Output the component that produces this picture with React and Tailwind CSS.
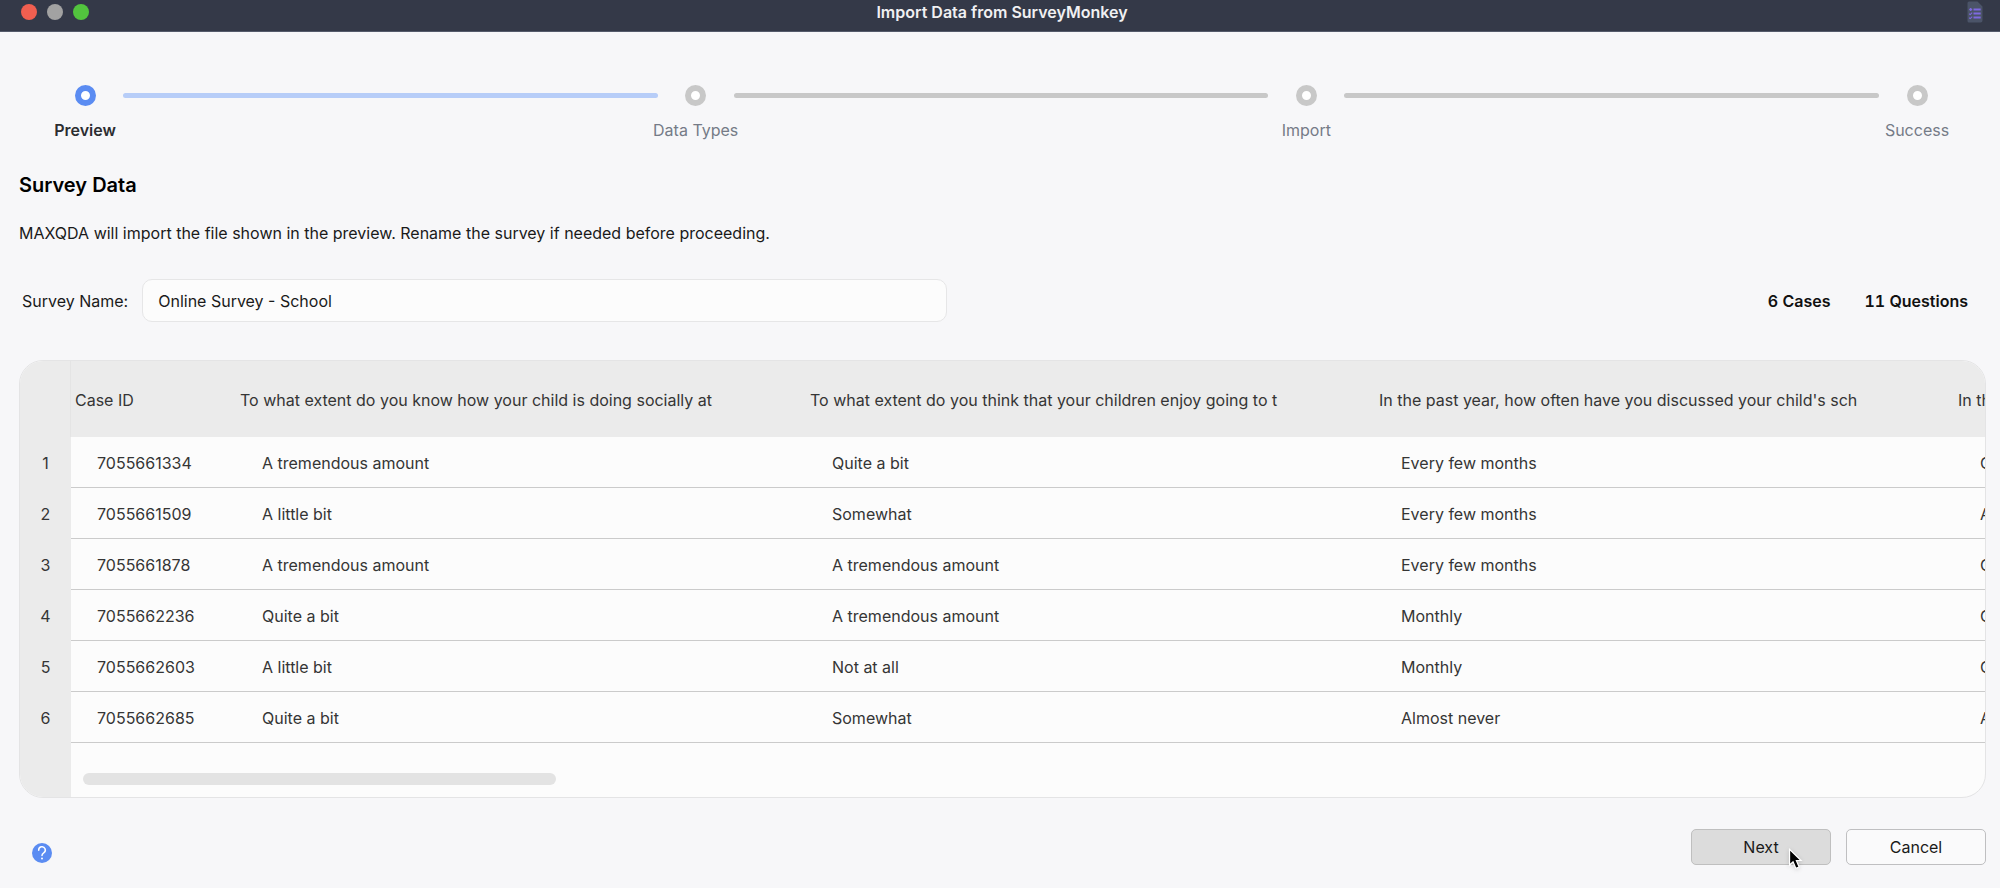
import React, { useState } from "react";

const steps = ["Preview", "Data Types", "Import", "Success"];

const columns = [
  "Case ID",
  "To what extent do you know how your child is doing socially at",
  "To what extent do you think that your children enjoy going to t",
  "In the past year, how often have you discussed your child's sch",
  "In the past year, how often have you visited your child's school",
];

const rows = [
  ["7055661334", "A tremendous amount", "Quite a bit", "Every few months", "Once or twice"],
  ["7055661509", "A little bit", "Somewhat", "Every few months", "Almost never"],
  ["7055661878", "A tremendous amount", "A tremendous amount", "Every few months", "Once or twice"],
  ["7055662236", "Quite a bit", "A tremendous amount", "Monthly", "Once or twice"],
  ["7055662603", "A little bit", "Not at all", "Monthly", "Once or twice"],
  ["7055662685", "Quite a bit", "Somewhat", "Almost never", "Almost never"],
];

function SurveyIcon() {
  return (
    <svg width="16" height="22" viewBox="0 0 16 22" aria-hidden="true">
      <path d="M2 0.500H10.500L15.500 5.500V19.500a2 2 0 0 1-2 2H2a1.500 1.500 0 0 1-1.500-1.500V2A1.500 1.500 0 0 1 2 0.500Z" fill="#4b5468" />
      <g stroke="#7f69e0" strokeWidth="1.900" fill="none">
        <path d="M6.500 8.500H13.700M6.500 12.500H13.700M6.500 16.500H13.700" />
        <path d="M2.200 8.500H5.200M3.700 7V10" strokeWidth="1.300" />
        <path d="M2.200 12.700L3.300 13.600L5.200 11.700M2.200 16.700L3.300 17.600L5.200 15.700" strokeWidth="1.100" />
      </g>
    </svg>
  );
}

function TitleBar() {
  return (
    <header className="grid h-8 grid-cols-[1fr_auto_1fr] items-start border-b border-[#555b6b] bg-[#343948] pr-[17px] pl-[21px]">
      <div className="flex gap-[10px] pt-1">
        <button aria-label="Close" className="size-4 rounded-full bg-[#f15f50]" />
        <button aria-label="Minimize" className="size-4 rounded-full bg-[#a2a2a2]" />
        <button aria-label="Zoom" className="size-4 rounded-full bg-[#52c43e]" />
      </div>
      <h1 className="text-base leading-6 font-semibold text-[#f0f0f2]">Import Data from SurveyMonkey</h1>
      <div className="flex justify-end pt-px">
        <SurveyIcon />
      </div>
    </header>
  );
}

function Stepper() {
  return (
    <ol className="flex pt-[53px] pr-[45px] pl-[47px]">
      {steps.map((step, i) => (
        <li key={step} className={i < steps.length - 1 ? "flex flex-1" : "flex"}>
          <div className="flex w-[76px] shrink-0 flex-col items-center gap-3">
            <span
              className={
                i === 0
                  ? "size-[21px] rounded-full border-6 border-[#5b8cf2] bg-white"
                  : "size-[21px] rounded-full border-6 border-[#c8c8c8] bg-white"
              }
            />
            <span
              className={
                i === 0
                  ? "text-base leading-6 font-semibold whitespace-nowrap text-[#2c2d31]"
                  : "text-base leading-6 whitespace-nowrap text-[#757b87]"
              }
            >
              {step}
            </span>
          </div>
          {i < steps.length - 1 && (
            <span
              className={
                i === 0
                  ? "mt-2 h-[5px] flex-1 rounded-full bg-[#b7cdf8]"
                  : "mt-2 h-[5px] flex-1 rounded-full bg-[#c8c8c8]"
              }
            />
          )}
        </li>
      ))}
    </ol>
  );
}

function PreviewTable() {
  return (
    <section className="mt-[38px] overflow-hidden rounded-3xl border border-[#e4e4e5] bg-[#fcfcfc]">
      <div className="overflow-x-auto [scrollbar-width:none]">
        <table className="w-[2512px] table-fixed border-separate border-spacing-0 text-left text-base text-[#353535]">
          <colgroup>
            <col className="w-[51px]" />
            <col className="w-[165px]" />
            <col className="w-[570px]" />
            <col className="w-[569px]" />
            <col className="w-[579px]" />
            <col className="w-[578px]" />
          </colgroup>
          <thead>
            <tr className="h-[76px] bg-[#ebebeb]">
              <th aria-label="Row" className="border-r border-[#e4e4e4]" />
              {columns.map((c) => (
                <th key={c} scope="col" className="pt-[2px] pl-1 font-normal whitespace-nowrap">
                  {c}
                </th>
              ))}
            </tr>
          </thead>
          <tbody>
            {rows.map((row, i) => (
              <tr key={row[0]} className="h-[51px]">
                <th scope="row" className="bg-[#ebebeb] pt-px text-center font-normal">
                  {i + 1}
                </th>
                {row.map((cell, j) => (
                  <td key={j} className="border-b border-[#cbcbcb] pt-[2px] pl-[26px]">
                    {cell}
                  </td>
                ))}
              </tr>
            ))}
          </tbody>
        </table>
      </div>
      <div className="flex">
        <div className="w-[51px] bg-[#ebebeb]" />
        <div className="flex-1 px-3 pt-[30px] pb-3">
          <div className="h-3 w-1/4 rounded-full bg-[#e3e3e3]" />
        </div>
      </div>
    </section>
  );
}

function Pointer() {
  return (
    <svg className="absolute top-[18px] left-[96px] drop-shadow-sm" width="16" height="23" viewBox="0 0 17 25" aria-hidden="true">
      <path d="M1.500 1.500V18.500L5.300 15L8.400 22.200L11.900 20.700L8.900 13.600H14Z" fill="#000" stroke="#fff" strokeWidth="1.300" />
    </svg>
  );
}

export default function App() {
  const [name, setName] = useState("Online Survey - School");
  return (
    <div className="min-h-screen bg-[#f7f7f9] font-['Inter','Liberation_Sans',sans-serif] text-base text-[#1a1a1a]">
      <TitleBar />
      <Stepper />
      <main className="pr-[14px] pl-[19px]">
        <h2 className="mt-[29px] text-xl leading-7 font-semibold text-black">Survey Data</h2>
        <p className="mt-[22px] leading-6">
          MAXQDA will import the file shown in the preview. Rename the survey if needed before proceeding.
        </p>
        <div className="mt-[34px] flex items-center justify-between pr-[18px] pl-[3px]">
          <div className="flex w-1/2 items-center gap-[14px]">
            <label htmlFor="survey-name" className="whitespace-nowrap">
              Survey Name:
            </label>
            <input
              id="survey-name"
              value={name}
              onChange={(e) => setName(e.target.value)}
              className="h-[43px] max-w-[805px] min-w-0 flex-1 rounded-[10px] border border-[#e6e6e7] bg-[#fcfcfc] px-[15px] outline-none"
            />
          </div>
          <div className="flex gap-[34px] font-semibold whitespace-nowrap text-[#111] tabular-nums">
            <span>6 Cases</span>
            <span>11 Questions</span>
          </div>
        </div>
        <PreviewTable />
      </main>
      <footer className="flex items-center justify-between pt-[31px] pr-[14px] pb-6 pl-8">
        <button aria-label="Help" className="mt-3">
          <svg width="20" height="20" viewBox="0 0 20 20" aria-hidden="true">
            <circle cx="10" cy="10" r="10" fill="#5b8cf2" />
            <path d="M6.700 7.200A3.300 3.300 0 1 1 11.700 9.800C10.500 10.500 10 11 10 12.500" fill="none" stroke="#fff" strokeWidth="1.500" strokeLinecap="round" />
            <circle cx="10" cy="15.600" r="1" fill="#fff" />
          </svg>
        </button>
        <div className="flex gap-[15px]">
          <button className="relative h-9 w-[140px] rounded-[5px] border border-[#bfbfbf] bg-[#dcdcdc]">
            Next
            <Pointer />
          </button>
          <button className="h-9 w-[140px] rounded-[5px] border border-[#bfbfc1] bg-[#fafafb]">Cancel</button>
        </div>
      </footer>
    </div>
  );
}
